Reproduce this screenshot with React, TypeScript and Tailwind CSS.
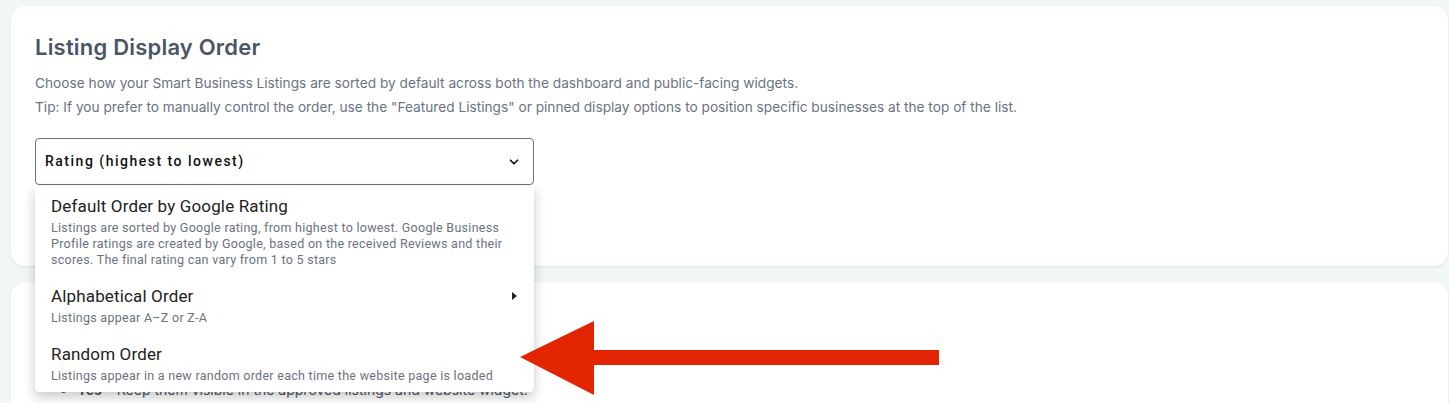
import { ChevronDown } from "lucide-react";

const options = [
  {
    title: "Default Order by Google Rating",
    desc: "Listings are sorted by Google rating, from highest to lowest. Google Business Profile ratings are created by Google, based on the received Reviews and their scores. The final rating can vary from 1 to 5 stars",
  },
  { title: "Alphabetical Order", desc: "Listings appear A–Z or Z-A", sub: true },
  { title: "Random Order", desc: "Listings appear in a new random order each time the website page is loaded" },
];

export default function App() {
  return (
    <div className="relative min-h-screen bg-[#f1f6f6] pt-[6px] pl-[11px] pr-px font-['Inter',sans-serif] overflow-hidden">
      {/* Card 1 */}
      <div className="relative z-10 rounded-[14px] bg-white px-6 pt-[27px] pb-[21px] shadow-[0_1px_3px_rgba(0,0,0,0.08)]">
        <h2 className="text-[22px] leading-[28px] font-semibold tracking-[0.2px] text-[#4a5565]">Listing Display Order</h2>
        <p className="mt-[10px] text-[13.7px] leading-[24px] text-[#6a7282]">
          Choose how your Smart Business Listings are sorted by default across both the dashboard and public-facing widgets.
        </p>
        <p className="text-[13.7px] leading-[24px] text-[#6a7282]">
          Tip: If you prefer to manually control the order, use the "Featured Listings" or pinned display options to position specific businesses at the top of the list.
        </p>

        <div className="relative mt-[19px] w-[499px]">
          <div className="flex h-[47px] items-center justify-between rounded-[4px] border border-[#6b7280] pl-[9px] pr-[12px]">
            <span className="font-['Roboto',sans-serif] text-[14px] font-medium tracking-[1.5px] text-[#111]">
              Rating (highest to lowest)
            </span>
            <ChevronDown size={14} strokeWidth={3} className="text-[#111]" />
          </div>

          <button className="mt-[15px] h-[45px] w-[120px] rounded-[6px] bg-[#4b5563] text-sm text-white">Save</button>

          {/* Dropdown menu */}
          <div className="absolute left-0 top-[48px] z-30 w-[499px] rounded-b-[4px] bg-white font-['Roboto',sans-serif] shadow-[0_5px_12px_rgba(0,0,0,0.22)]">
            {options.map((o) => (
              <div key={o.title} className="relative px-4 py-2">
                <div className="text-[17px] leading-[24px] tracking-[0.15px] text-[#222]">{o.title}</div>
                <div className="mt-[2px] text-[12.5px] leading-[16px] tracking-[0.28px] text-[#6b7280]">{o.desc}</div>
                {o.sub && (
                  <div className="absolute right-[17px] top-[16px] h-0 w-0 border-y-[4px] border-l-[5px] border-y-transparent border-l-[#222]" />
                )}
              </div>
            ))}
          </div>
        </div>
      </div>

      {/* Card 2 */}
      <div className="mt-4 h-[200px] rounded-[14px] bg-white px-6 pt-6 shadow-[0_1px_3px_rgba(0,0,0,0.08)]">
        <h3 className="text-[20px] leading-[30px] font-semibold text-[#4a5565]">Hidden Listings</h3>
        <p className="mt-2 text-[14px] leading-[21px] text-[#6a7282]">Choose what happens.</p>
        <ul className="mt-[13px] list-disc pl-[42px] text-[14px] leading-[24px] text-[#4a5565]">
          <li>
            <b>Yes</b> – Keep them visible in the approved listings and website widget.
          </li>
        </ul>
      </div>

      {/* Red arrow annotation */}
      <svg className="absolute left-0 top-0 z-40" width="1449" height="403" viewBox="0 0 1449 403">
        <polygon points="520,357 594,321 594,395" fill="#e32400" />
        <rect x="593" y="350" width="346" height="15" fill="#e32400" />
      </svg>
    </div>
  );
}
